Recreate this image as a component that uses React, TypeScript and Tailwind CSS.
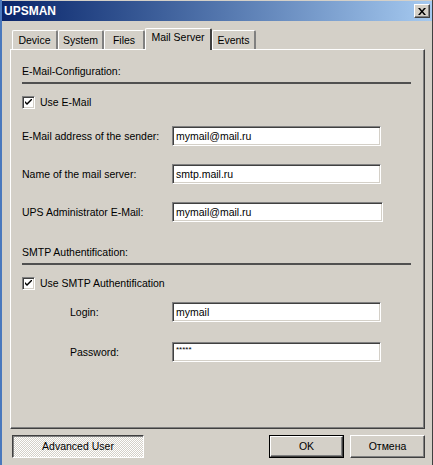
import React from "react";

const font = "font-['Liberation_Sans',Arial,sans-serif]";

const sunken =
  "border border-t-[#808080] border-l-[#808080] border-b-white border-r-white shadow-[inset_1px_1px_0_#404040,inset_-1px_-1px_0_#d4d0c8]";

const raised =
  "border border-t-white border-l-white border-b-[#404040] border-r-[#404040] shadow-[inset_-1px_-1px_0_#808080]";

function Field({ value, small, wide }: { value: string; small?: boolean; wide?: boolean }) {
  return (
    <div className={`${wide ? "w-[211px]" : "w-[209px]"} h-[20px] bg-white ${sunken} flex items-center pl-[3px]`}>
      <span className={small ? "text-[8px] leading-none -mt-[5px]" : "text-[10.5px] leading-none"}>{value}</span>
    </div>
  );
}

function Check({ label }: { label: string }) {
  return (
    <div className="flex items-center gap-[5px] h-[13px]">
      <div className={`w-[13px] h-[13px] bg-white ${sunken} flex items-center justify-center`}>
        <svg width="7" height="7" viewBox="0 0 7 7">
          <path d="M0 2 L0 4 L2 6 L7 1 L7 -1 L2 4 Z" fill="#000" />
        </svg>
      </div>
      <span className="text-[10.5px] leading-none">{label}</span>
    </div>
  );
}

function Section({ title }: { title: string }) {
  return (
    <div className="pr-[2px]">
      <div className="text-[10.5px] leading-none h-[12px]">{title}</div>
      <div className="mt-[4px] h-[2px] bg-[#505050]" />
    </div>
  );
}

function Row({
  label,
  value,
  indent,
  small,
  wide,
}: {
  label: string;
  value: string;
  indent?: boolean;
  small?: boolean;
  wide?: boolean;
}) {
  return (
    <div className="flex items-center">
      <div className={`w-[150px] text-[10.5px] leading-none ${indent ? "pl-[48px]" : ""}`}>{label}</div>
      <Field value={value} small={small} wide={wide} />
    </div>
  );
}

const tabs = ["Device", "System", "Files", "Mail Server", "Events"];
const tabW = [46, 46, 41, 67, 44];

export default function App() {
  return (
    <div className={`w-[433px] h-[465px] bg-[#d4d0c8] text-black ${font} border-l-2 border-l-[#4a78bd] border-r border-r-[#404040] flex flex-col overflow-hidden`}>
      {/* title bar */}
      <div className="h-[20px] mt-[1px] bg-gradient-to-r from-[#0a246a] to-[#a6caf0] flex items-center justify-between pl-[2px] pr-[2px]">
        <span className="text-white font-bold text-[12px] leading-none">UPSMAN</span>
        <div className={`w-[16px] h-[14px] bg-[#d4d0c8] ${raised} flex items-center justify-center`}>
          <svg width="8" height="7" viewBox="0 0 8 7">
            <path d="M0 0h2l2 2.5L6 0h2L5 3.5 8 7H6L4 4.5 2 7H0l3-3.5z" fill="#000" />
          </svg>
        </div>
      </div>

      {/* tabs */}
      <div className="mt-[7px] pl-[10px] flex items-end h-[21px] relative z-10">
        {tabs.map((t, i) => {
          const sel = t === "Mail Server";
          return (
            <div
              key={t}
              style={{ width: tabW[i] }}
              className={
                sel
                  ? "shrink-0 h-[22px] -mb-[1px] bg-[#d4d0c8] border-t border-l border-t-white border-l-white border-r-2 border-r-[#404040] rounded-t-[2px] flex items-start justify-center pt-[3px] text-[10.5px] leading-none z-10"
                  : "shrink-0 h-[19px] bg-[#d4d0c8] border-t border-l border-t-white border-l-white border-r-2 border-r-[#808080] rounded-t-[2px] flex items-center justify-center text-[10.5px] leading-none pt-[1px]"
              }
            >
              {t}
            </div>
          );
        })}
      </div>

      {/* panel */}
      <div className="ml-[8px] mr-[7px] h-[380px] border border-t-white border-l-white border-b-[#404040] border-r-[#404040] shadow-[inset_-1px_-1px_0_#808080] px-[11px] pt-[16px]">
        <Section title="E-Mail-Configuration:" />
        <div className="mt-[12px]">
          <Check label="Use E-Mail" />
        </div>
        <div className="mt-[17px] flex flex-col gap-[18px]">
          <Row label="E-Mail address of the sender:" value="mymail@mail.ru" />
          <Row label="Name of the mail server:" value="smtp.mail.ru" />
          <Row label="UPS Administrator E-Mail:" value="mymail@mail.ru" wide />
        </div>
        <div className="mt-[25px]">
          <Section title="SMTP Authentification:" />
        </div>
        <div className="mt-[12px]">
          <Check label="Use SMTP Authentification" />
        </div>
        <div className="mt-[12px] flex flex-col gap-[20px]">
          <Row label="Login:" value="mymail" indent />
          <Row label="Password:" value="*****" indent small />
        </div>
      </div>

      {/* bottom buttons */}
      <div className="mt-[6px] pl-[10px] pr-[7px] flex items-center">
        <div className="w-[132px] h-[23px] border border-t-[#404040] border-l-[#404040] border-b-white border-r-white shadow-[inset_1px_1px_0_#808080] bg-[image:repeating-conic-gradient(#ffffff_0_25%,#d4d0c8_0_50%)] bg-[length:2px_2px] flex items-center justify-center text-[10.5px] leading-none">
          Advanced User
        </div>
        <div className="flex-1" />
        <div className="w-[75px] h-[23px] border border-black flex">
          <div className={`flex-1 ${raised} flex items-center justify-center text-[10.5px] leading-none`}>OK</div>
        </div>
        <div className={`ml-[6px] w-[75px] h-[23px] ${raised} flex items-center justify-center text-[10.5px] leading-none`}>
          Отмена
        </div>
      </div>
    </div>
  );
}
